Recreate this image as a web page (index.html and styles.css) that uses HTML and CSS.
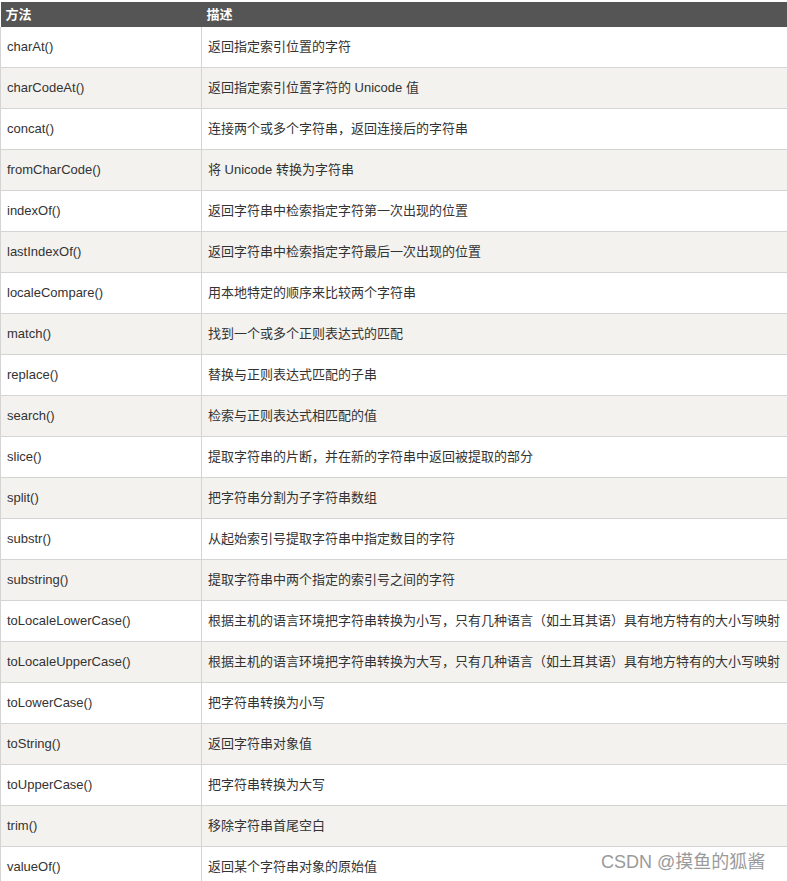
FILE: index.html
```html
<!DOCTYPE html>
<html>
<head>
<meta charset="utf-8">
<link rel="stylesheet" href="styles.css">
</head>
<body>
<table class="ref">
<thead>
<tr><th class="c1">方法</th><th class="c2">描述</th></tr>
</thead>
<tbody>
<tr><td>charAt()</td><td>返回指定索引位置的字符</td></tr>
<tr><td>charCodeAt()</td><td>返回指定索引位置字符的 Unicode 值</td></tr>
<tr><td>concat()</td><td>连接两个或多个字符串，返回连接后的字符串</td></tr>
<tr><td>fromCharCode()</td><td>将 Unicode 转换为字符串</td></tr>
<tr><td>indexOf()</td><td>返回字符串中检索指定字符第一次出现的位置</td></tr>
<tr><td>lastIndexOf()</td><td>返回字符串中检索指定字符最后一次出现的位置</td></tr>
<tr><td>localeCompare()</td><td>用本地特定的顺序来比较两个字符串</td></tr>
<tr><td>match()</td><td>找到一个或多个正则表达式的匹配</td></tr>
<tr><td>replace()</td><td>替换与正则表达式匹配的子串</td></tr>
<tr><td>search()</td><td>检索与正则表达式相匹配的值</td></tr>
<tr><td>slice()</td><td>提取字符串的片断，并在新的字符串中返回被提取的部分</td></tr>
<tr><td>split()</td><td>把字符串分割为子字符串数组</td></tr>
<tr><td>substr()</td><td>从起始索引号提取字符串中指定数目的字符</td></tr>
<tr><td>substring()</td><td>提取字符串中两个指定的索引号之间的字符</td></tr>
<tr><td>toLocaleLowerCase()</td><td>根据主机的语言环境把字符串转换为小写，只有几种语言（如土耳其语）具有地方特有的大小写映射</td></tr>
<tr><td>toLocaleUpperCase()</td><td>根据主机的语言环境把字符串转换为大写，只有几种语言（如土耳其语）具有地方特有的大小写映射</td></tr>
<tr><td>toLowerCase()</td><td>把字符串转换为小写</td></tr>
<tr><td>toString()</td><td>返回字符串对象值</td></tr>
<tr><td>toUpperCase()</td><td>把字符串转换为大写</td></tr>
<tr><td>trim()</td><td>移除字符串首尾空白</td></tr>
<tr><td>valueOf()</td><td>返回某个字符串对象的原始值</td></tr>
</tbody>
</table>
<div class="watermark">CSDN @摸鱼的狐酱</div>
</body>
</html>
```
FILE: styles.css
```css
html, body {
  margin: 0;
  padding: 0;
  background: #ffffff;
  overflow: hidden;
}
body {
  font-family: "Liberation Sans", "Noto Sans CJK SC", sans-serif;
  font-size: 13px;
  color: #333333;
}
.ref {
  margin-top: 2px;
  border-collapse: collapse;
  width: 800px;
  table-layout: fixed;
}
.ref th {
  background: #555555;
  color: #ffffff;
  font-weight: bold;
  text-align: left;
  height: 25px;
  padding: 0 5px;
  font-size: 13px;
  line-height: 25px;
}
.ref .c1 {
  width: 191px;
}
.ref td {
  border: 1px solid #d4d4d4;
  height: 40px;
  padding: 0 6px;
  vertical-align: middle;
  white-space: nowrap;
  line-height: 16px;
}
.ref tbody tr:first-child td {
  border-top: none;
}
.ref tbody tr:nth-child(even) td {
  background: #f3f2ee;
}
.watermark {
  position: absolute;
  left: 601px;
  top: 851px;
  font-size: 18px;
  line-height: 22px;
  color: #9a9a9a;
  white-space: nowrap;
}
```
